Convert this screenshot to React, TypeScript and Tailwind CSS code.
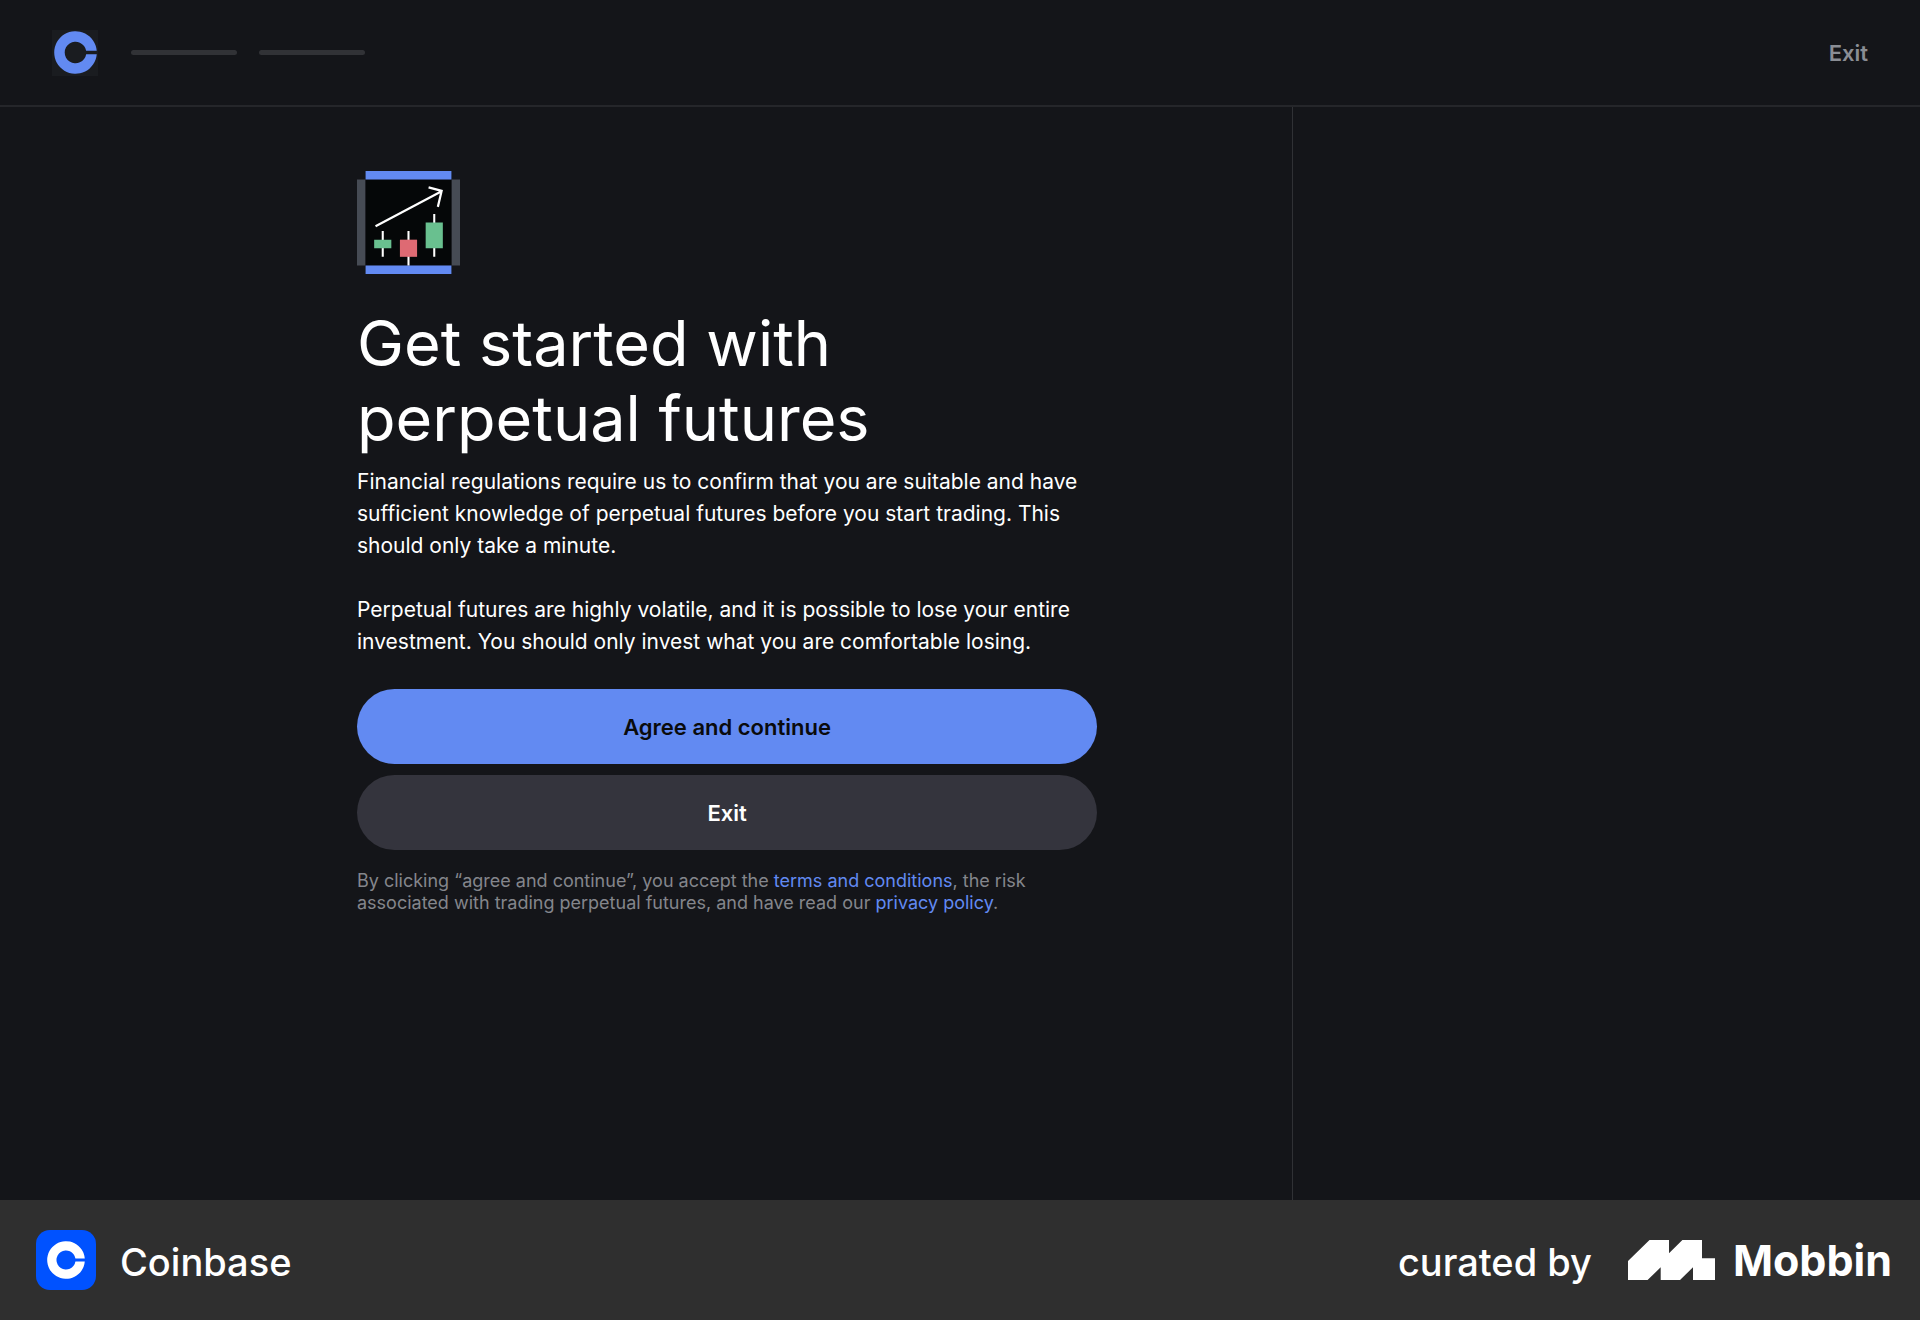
function CoinMark({ className }: { className: string }) {
  return (
    <svg viewBox="-21.5 -21.5 43 43" className={className} fill="currentColor" aria-hidden="true">
      <path d="M21.24-1.7A21.3 21.3 0 1 0 21.24 1.7H10.67A10.8 10.8 0 1 1 10.67-1.7Z" />
    </svg>
  );
}

function FuturesIllustration() {
  return (
    <svg viewBox="0 0 12 12" className="size-[103px]" aria-hidden="true">
      <path fill="#464b54" d="M0 1h1v10H0zM11 1h1v10h-1z" />
      <path fill="#050708" d="M1 1h10v10H1z" />
      <path fill="#628af2" d="M1 0h10v1H1zM1 11h10v1H1z" />
      <path fill="#fff" d="M2.88 7h.24v3h-.24zM5.88 7h.24v4h-.24zM8.88 5h.24v5h-.24z" />
      <path fill="#69c08f" d="M2 8h2v1H2zM8 6h2v3H8z" />
      <path fill="#de6a73" d="M5 8h2v2H5z" />
      <path d="M2.16 6.44 9.86 2.36M8.34 1.9l1.52.42-.44 1.86" fill="none" stroke="#fff" strokeWidth=".26" />
    </svg>
  );
}

function MobbinMark() {
  return (
    <svg viewBox="0 0 87 40" className="h-10 w-[87px]" fill="#fff" aria-hidden="true">
      <path d="M0 21 21.5 0H41v13.3L54.4 0H74v18.3h13V40H65V27.3L52 40H32.7V27.3L19.6 40H0z" />
    </svg>
  );
}

export default function App() {
  return (
    <div className="flex min-h-screen flex-col bg-[#141519] font-['Inter',sans-serif] text-white">
      <header className="flex h-[107px] items-center justify-between border-b-2 border-[#25262a] px-[52px]">
        <div className="flex items-center">
          <a href="#home" aria-label="Home" className="grid size-[46px] place-items-center bg-[#1a1c20] text-[#628af2]">
            <CoinMark className="size-[43px]" />
          </a>
          <div className="ml-[33px] flex gap-[22px]">
            <div className="h-[5px] w-[106px] rounded-full bg-[#313236]" />
            <div className="h-[5px] w-[106px] rounded-full bg-[#313236]" />
          </div>
        </div>
        <button type="button" className="text-[22px] leading-8 font-semibold text-[#8a8d94]">Exit</button>
      </header>

      <div className="flex flex-1">
        <main className="w-[67.35%] border-r border-[#303135] pt-16 pr-[195px] pb-16 pl-[357px]">
          <FuturesIllustration />
          <h1 className="mt-8 text-[63px] leading-[75px]">
            Get started with
            <br />
            perpetual futures
          </h1>
          <div className="mt-[10px] space-y-8 text-[21px] leading-8">
            <p>
              Financial regulations require us to confirm that you are suitable and have sufficient knowledge of
              perpetual futures before you start trading. This should only take a minute.
            </p>
            <p>
              Perpetual futures are highly volatile, and it is possible to lose your entire investment. You should only
              invest what you are comfortable losing.
            </p>
          </div>
          <div className="mt-[31px] flex flex-col gap-[11px] text-[22px] leading-8 font-semibold">
            <button type="button" className="h-[75px] rounded-full bg-[#628af2] text-[#0a0b0d]">Agree and continue</button>
            <button type="button" className="h-[75px] rounded-full bg-[#34343d]">Exit</button>
          </div>
          <p className="mt-5 text-[18px] leading-[22px] text-[#84868c]">
            By clicking “agree and continue”, you accept the{" "}
            <a href="#terms" className="text-[#628af2]">terms and conditions</a>, the risk associated with trading
            perpetual futures, and have read our <a href="#privacy" className="text-[#628af2]">privacy policy</a>.
          </p>
        </main>
        <aside className="flex-1" />
      </div>

      <footer className="flex h-[120px] items-center justify-between bg-[#2f2f2f] pr-7 pl-9">
        <div className="flex items-center gap-6">
          <div className="grid size-[60px] place-items-center rounded-[14px] bg-[#0052ff]">
            <CoinMark className="size-[38px]" />
          </div>
          <span className="pt-1 text-[38px] leading-[44px] font-medium">Coinbase</span>
        </div>
        <div className="flex items-center">
          <span className="pt-1 text-[38px] leading-[44px] font-medium">curated by</span>
          <div className="ml-9 flex items-center gap-[18px]">
            <MobbinMark />
            <span className="text-[43px] leading-[44px] font-bold">Mobbin</span>
          </div>
        </div>
      </footer>
    </div>
  );
}
